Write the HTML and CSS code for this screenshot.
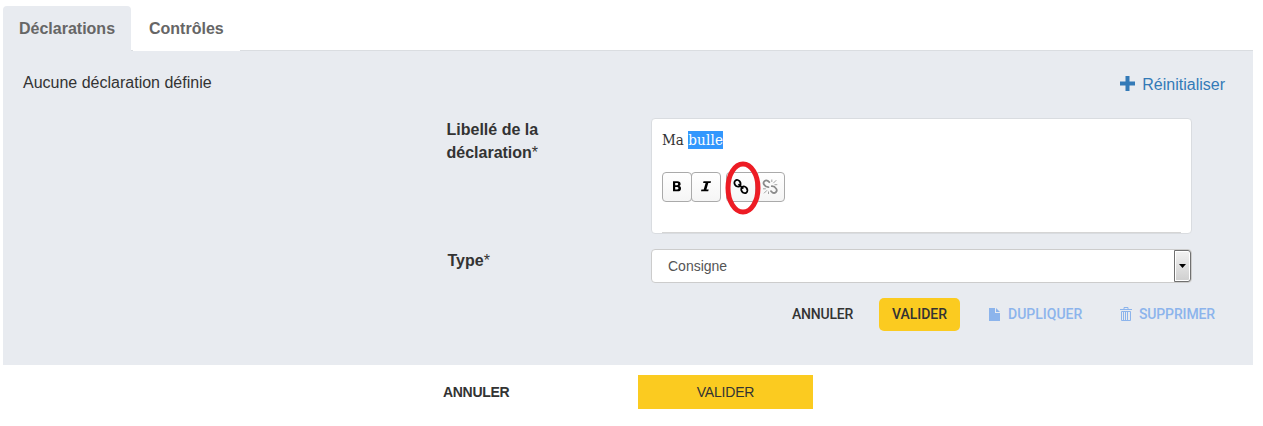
FILE: index.html
```html
<!DOCTYPE html>
<html lang="fr">
<head>
<meta charset="utf-8">
<title>Déclarations</title>
<link rel="stylesheet" href="styles.css">
</head>
<body>
<nav class="tabs">
  <a class="tab active"><span>Déclarations</span></a>
  <a class="tab second"><span>Contrôles</span></a>
</nav>
<main class="panel">
  <div class="topline">
    <span class="empty">Aucune déclaration définie</span>
    <a class="reset"><svg width="16" height="16" viewBox="0 0 16 16"><path d="M6.500 0h4v5.500H16v4h-5.500V15h-4V9.500H1v-4h5.500z" fill="#337ab7"/></svg><span>Réinitialiser</span></a>
  </div>
  <form class="form">
    <label class="label">Libellé de la<br>déclaration<sup>*</sup></label>
    <div class="editor">
      <p class="content">Ma <mark>bulle</mark></p>
      <div class="toolbar">
        <button type="button" class="tool"><svg width="28" height="28" viewBox="0 0 28 28"><path fill-rule="evenodd" d="M10 8.300h4.300c2.200 0 3.300 1 3.300 2.600 0 1.100-.5 1.800-1.400 2.100 1.200.3 1.800 1.200 1.800 2.400 0 1.900-1.200 2.900-3.400 2.900H10zm2.200 1.800v2.200h1.900c1.500 0 1.500-2.200 0-2.200zm0 3.900v2.500h2.100c1.600 0 1.600-2.500 0-2.500z"/></svg></button>
        <button type="button" class="tool"><svg width="28" height="28" viewBox="0 0 28 28"><path d="M11.500 8.300h7.500l-.4 1.700h-2.300l-1.900 6.600h2.300l-.5 1.700H9l.4-1.700h2.300l1.900-6.600h-2.500z"/></svg></button>
        <button type="button" class="tool link"><svg width="28" height="28" viewBox="0 0 28 28"><g fill="none" stroke="#000" stroke-width="1.800"><ellipse cx="10.500" cy="10.300" rx="2.900" ry="3.500" transform="rotate(-35 10.500 10.300)"/><ellipse cx="17.300" cy="16.800" rx="2.900" ry="3.500" transform="rotate(-35 17.300 16.800)"/><path d="M11.500 11.200l4.800 4.500"/></g></svg></button>
        <button type="button" class="tool"><svg width="28" height="28" viewBox="0 0 28 28"><g fill="none" stroke="#8b8b8b" stroke-width="1.800" stroke-linecap="round"><path d="M13.300 9.200L12 8C9.500 6.300 6.500 9 8 11.500c1 1.600 2.700 2.800 4.500 2.700M15 18.200l1.300 1.200c2.500 1.700 5.500-1 4-3.500-1-1.600-2.700-2.800-4.500-2.700"/><path stroke-width=".8" stroke-linecap="butt" d="M15.800 9V6.500M17.300 10.200l3-3M18.500 11.700h2.800M12.500 18.500V21M11 17.300l-3 3M9.800 15.800H7"/></g></svg></button>
        <svg class="ring" width="36" height="54" viewBox="0 0 36 54"><ellipse cx="18" cy="27" rx="15" ry="24" fill="none" stroke="#ed1c24" stroke-width="5"/></svg>
      </div>
      <div class="rule"></div>
    </div>
    <label class="label type">Type<sup>*</sup></label>
    <div class="select"><span>Consigne</span><i class="arrow"><svg width="7" height="4" viewBox="0 0 7 4"><path d="M0 0h7L3.500 4z"/></svg></i></div>
  </form>
  <div class="actions">
    <a class="action cancel">ANNULER</a>
    <a class="action primary">VALIDER</a>
    <a class="action muted copy"><svg width="11" height="13" viewBox="0 0 11 13"><path d="M0 0h6v5h5v8H0zM7 0l4 4H7z" fill="#8cb4ec"/></svg><span>DUPLIQUER</span></a>
    <a class="action muted delete"><svg width="12" height="14" viewBox="0 0 12 14"><g fill="none" stroke="#8cb4ec"><path d="M0 2.500h12M4 2V.5h4V2M1.500 4.500h9v9h-9z"/><path d="M3.500 5v8M5.500 5v8M7.500 5v8"/></g></svg><span>SUPPRIMER</span></a>
  </div>
</main>
<footer class="footer">
  <a class="foot-cancel">ANNULER</a>
  <a class="foot-submit">VALIDER</a>
</footer>
</body>
</html>
```
FILE: styles.css
```css
* { box-sizing: border-box; }
body {
  margin: 0;
  padding: 6px 10px 0 3px;
  height: 426px;
  overflow: hidden;
  background: #fff;
  color: #333;
  font: 16px/23px "Liberation Sans", Arial, sans-serif;
}
.tabs { display: flex; height: 44px; }
.tab {
  height: 44px;
  padding: 11px 16px 0;
  color: #666;
  font-weight: bold;
  white-space: nowrap;
}
.active { width: 128px; background: #e8ebf0; border-radius: 4px 4px 0 0; }
.second { width: 107px; margin-left: 2px; }
.tabs .active { height: 45px; }
.panel {
  height: 315px;
  background: linear-gradient(#fff, #fff) 130px 0 / 107px 1px no-repeat,
    linear-gradient(#dadde1, #dadde1) 128px 0 / 1122px 1px no-repeat, #e8ebf0;
}
.topline {
  display: flex;
  justify-content: space-between;
  height: 68px;
  padding: 21px 28px 0 20px;
}
.reset { display: flex; align-items: center; gap: 7px; height: 26px; color: #337ab7; }
.form {
  display: grid;
  grid-template-columns: 204.5px 541px;
  grid-template-rows: 116px 34px;
  row-gap: 15px;
  padding-left: 443.5px;
}
.label { font-weight: bold; }
.label sup { font-size: 16px; font-weight: normal; line-height: 0; vertical-align: 0; }
.type { padding-left: 1px; }
.editor {
  border: 1px solid #d9dce0;
  border-radius: 4px;
  background: #fff;
  padding: 12px 10px 0;
}
.content {
  margin: 0;
  height: 41px;
  font: 15px/19px "DejaVu Serif Condensed", "DejaVu Serif", serif;
  font-stretch: condensed;
}
mark { background: #3297fd; color: #fff; letter-spacing: 0.2px; }
.toolbar { position: relative; display: flex; height: 60px; }
.tool {
  width: 30px;
  height: 30px;
  padding: 0;
  border: 1px solid #aaa;
  border-radius: 4px;
  background: linear-gradient(#fff, #f5f5f5);
}
.tool svg { display: block; }
.tool + .tool { margin-left: -1px; }
.tool + .link { margin-left: 5px; }
.ring { position: absolute; left: 63px; top: -11px; }
.rule { height: 1px; background: #d5d5d5; }
.select {
  display: flex;
  justify-content: space-between;
  align-items: center;
  border: 1px solid #ccc;
  border-radius: 4px;
  background: #fff;
  padding-left: 16px;
  color: #555;
  font-size: 14px;
}
.arrow {
  display: flex;
  align-items: center;
  justify-content: center;
  width: 17px;
  height: 32px;
  border: 1px solid #707070;
  border-radius: 0 3px 3px 0;
  background: linear-gradient(#f2f2f2, #cfcfcf);
  box-shadow: inset 0 0 0 1px #fff;
}
.actions { display: flex; height: 33px; margin-top: 15px; padding-left: 789px; }
.action {
  display: flex;
  align-items: center;
  padding-bottom: 1px;
  font: 500 14px/20px Roboto, "Liberation Sans", sans-serif;
}
.cancel { width: 87px; letter-spacing: -0.2px; }
.primary {
  justify-content: center;
  width: 81px;
  margin-right: 29px;
  border-radius: 5px;
  background: #fbcb20;
}
.muted { gap: 8px; color: #8cb4ec; }
.copy { width: 131px; }
.delete { gap: 7px; letter-spacing: -0.15px; }
.footer { display: flex; padding: 10px 0 0 440px; font-size: 14px; line-height: 34px; }
.foot-cancel { width: 195px; font-weight: bold; letter-spacing: -0.3px; }
.foot-submit { width: 175px; background: #fbcb20; text-align: center; letter-spacing: -0.2px; }
```
